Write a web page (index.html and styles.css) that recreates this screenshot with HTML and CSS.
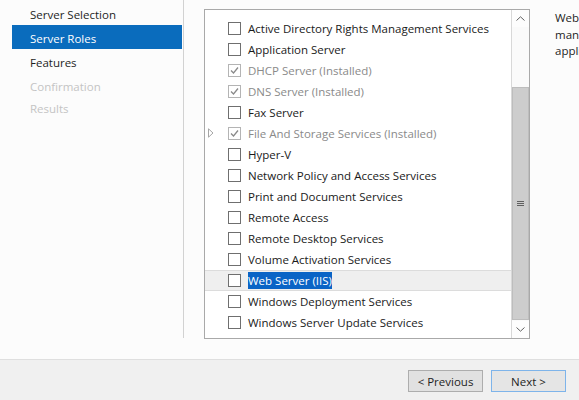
FILE: index.html
```html
<!DOCTYPE html>
<html>
<head>
<meta charset="utf-8">
<link rel="stylesheet" href="styles.css">
</head>
<body>
<div class="page">
  <div class="main">
    <nav class="nav">
      <div class="nav-item">Server Selection</div>
      <div class="nav-item active">Server Roles</div>
      <div class="nav-item">Features</div>
      <div class="nav-item disabled">Confirmation</div>
      <div class="nav-item disabled">Results</div>
    </nav>
    <div class="content">
      <div class="listbox">
        <div class="list">
          <div class="row"><span class="exp"></span><span class="cb"></span><span class="label">Active Directory Rights Management Services</span></div>
          <div class="row"><span class="exp"></span><span class="cb"></span><span class="label">Application Server</span></div>
          <div class="row installed"><span class="exp"></span><span class="cb checked"><svg viewBox="0 0 13 13" width="13" height="13"><path d="M3 6.5 L5.5 9 L10 3.5" fill="none" stroke="#8a8a8a" stroke-width="1.3"/></svg></span><span class="label">DHCP Server (Installed)</span></div>
          <div class="row installed"><span class="exp"></span><span class="cb checked"><svg viewBox="0 0 13 13" width="13" height="13"><path d="M3 6.5 L5.5 9 L10 3.5" fill="none" stroke="#8a8a8a" stroke-width="1.3"/></svg></span><span class="label">DNS Server (Installed)</span></div>
          <div class="row"><span class="exp"></span><span class="cb"></span><span class="label">Fax Server</span></div>
          <div class="row installed"><span class="exp"><svg viewBox="0 0 6 10" width="6" height="10"><path d="M0.5 0.8 L5 5 L0.5 9.2 Z" fill="none" stroke="#a6a6a6" stroke-width="1"/></svg></span><span class="cb checked"><svg viewBox="0 0 13 13" width="13" height="13"><path d="M3 6.5 L5.5 9 L10 3.5" fill="none" stroke="#8a8a8a" stroke-width="1.3"/></svg></span><span class="label">File And Storage Services (Installed)</span></div>
          <div class="row"><span class="exp"></span><span class="cb"></span><span class="label">Hyper-V</span></div>
          <div class="row"><span class="exp"></span><span class="cb"></span><span class="label">Network Policy and Access Services</span></div>
          <div class="row"><span class="exp"></span><span class="cb"></span><span class="label">Print and Document Services</span></div>
          <div class="row"><span class="exp"></span><span class="cb"></span><span class="label">Remote Access</span></div>
          <div class="row"><span class="exp"></span><span class="cb"></span><span class="label">Remote Desktop Services</span></div>
          <div class="row"><span class="exp"></span><span class="cb"></span><span class="label">Volume Activation Services</span></div>
          <div class="row hover"><span class="exp"></span><span class="cb"></span><span class="label selected">Web Server (IIS)</span></div>
          <div class="row"><span class="exp"></span><span class="cb"></span><span class="label">Windows Deployment Services</span></div>
          <div class="row"><span class="exp"></span><span class="cb"></span><span class="label">Windows Server Update Services</span></div>
        </div>
        <div class="scrollbar">
          <div class="sb-btn"><svg viewBox="0 0 9 5" width="9" height="5"><path d="M0.5 4.5 L4.5 0.8 L8.5 4.5" fill="none" stroke="#606060" stroke-width="1"/></svg></div>
          <div class="sb-track">
            <div class="sb-thumb"><svg viewBox="0 0 7 6" width="7" height="6"><path d="M0 0.5 H7 M0 2.5 H7 M0 4.5 H7" stroke="#606060" stroke-width="1"/></svg></div>
          </div>
          <div class="sb-btn"><svg viewBox="0 0 9 5" width="9" height="5"><path d="M0.5 0.5 L4.5 4.2 L8.5 0.5" fill="none" stroke="#606060" stroke-width="1"/></svg></div>
        </div>
      </div>
      <p class="desc">Web Server (IIS) provides a reliable, manageable, and scalable Web application infrastructure.</p>
    </div>
  </div>
  <div class="footer">
    <button class="btn">&lt; Previous</button>
    <button class="btn default">Next &gt;</button>
  </div>
</div>
</body>
</html>
```
FILE: styles.css
```css
html, body {
  margin: 0;
  padding: 0;
  width: 579px;
  height: 400px;
  overflow: hidden;
  background: #fcfcfc;
  font-family: "Open Sans", "Noto Sans", sans-serif;
  font-size: 11.5px;
  color: #1e1e1e;
}
.page {
  display: flex;
  flex-direction: column;
  height: 400px;
}
.main {
  height: 359px;
  display: flex;
  flex-direction: row;
  overflow: hidden;
}
.nav {
  width: 184px;
  height: 338px;
  flex: none;
  border-right: 1px solid #d2d2d2;
  padding-top: 1px;
  box-sizing: border-box;
}
.nav-item {
  height: 24px;
  box-sizing: border-box;
  padding-top: 3px;
  line-height: 21px;
  margin-left: 12px;
  margin-right: 1px;
  padding-left: 18px;
  white-space: nowrap;
}
.nav-item.active {
  background: #0a6cbd;
  color: #ffffff;
}
.nav-item.disabled {
  color: #c4c4c4;
}
.nav-item:last-child {
  padding-top: 1px;
}
.content {
  display: flex;
  flex-direction: row;
  align-items: flex-start;
  padding-left: 20px;
  padding-top: 9px;
}
.listbox {
  width: 326px;
  height: 330px;
  box-sizing: border-box;
  border: 1px solid #a9a9a9;
  background: #ffffff;
  display: flex;
  flex: none;
}
.list {
  flex: 1;
  padding-top: 7.5px;
}
.row {
  height: 21px;
  display: flex;
  align-items: center;
  box-sizing: border-box;
  white-space: nowrap;
  color: #1a1a1a;
}
.row.installed {
  color: #8a8a8a;
}
.row.hover {
  background: #efefef;
  border-top: 1px solid #dcdcdc;
  border-bottom: 1px solid #dcdcdc;
}
.exp {
  width: 23px;
  flex: none;
  display: flex;
  align-items: center;
  padding-left: 3px;
  box-sizing: border-box;
}
.exp svg {
  display: block;
}
.cb {
  width: 13px;
  height: 13px;
  box-sizing: border-box;
  border: 1px solid #6f6f6f;
  background: #ffffff;
  flex: none;
  position: relative;
}
.cb.checked {
  border-color: #b4b4b4;
}
.cb svg {
  position: absolute;
  left: -1px;
  top: -1px;
}
.label {
  margin-left: 7px;
  line-height: 17px;
}
.label.selected {
  background: #0a64c6;
  color: #ffffff;
}
.scrollbar {
  width: 17px;
  flex: none;
  border-left: 1px solid #d8d8d8;
  display: flex;
  flex-direction: column;
  background: #f7f7f7;
}
.sb-btn {
  height: 17px;
  flex: none;
  display: flex;
  align-items: center;
  justify-content: center;
  background: #fdfdfd;
}
.sb-track {
  flex: 1;
  display: flex;
  flex-direction: column;
  padding-top: 60px;
  padding-bottom: 1px;
  background: #fafafa;
}
.sb-thumb {
  flex: 1;
  background: #cdcdcd;
  border: 1px solid #bdbdbd;
  display: flex;
  align-items: center;
  justify-content: center;
}
.desc {
  margin: 1px 0 0 25px;
  width: 200px;
  flex: none;
  line-height: 16.5px;
  color: #1e1e1e;
}
.footer {
  flex: 1;
  background: #f0f0f0;
  border-top: 1px solid #dfdfdf;
  display: flex;
  justify-content: flex-end;
  align-items: flex-start;
  gap: 8px;
  padding: 10px 13px 0 0;
}
.btn {
  width: 75px;
  height: 22px;
  font-family: "Open Sans", "Noto Sans", sans-serif;
  font-size: 11.5px;
  color: #1e1e1e;
  background: #e1e1e1;
  border: 1px solid #adadad;
  padding: 0;
  margin: 0;
}
.btn.default {
  background: #e5e5e5;
  border-color: #7eb4ea;
}
```
